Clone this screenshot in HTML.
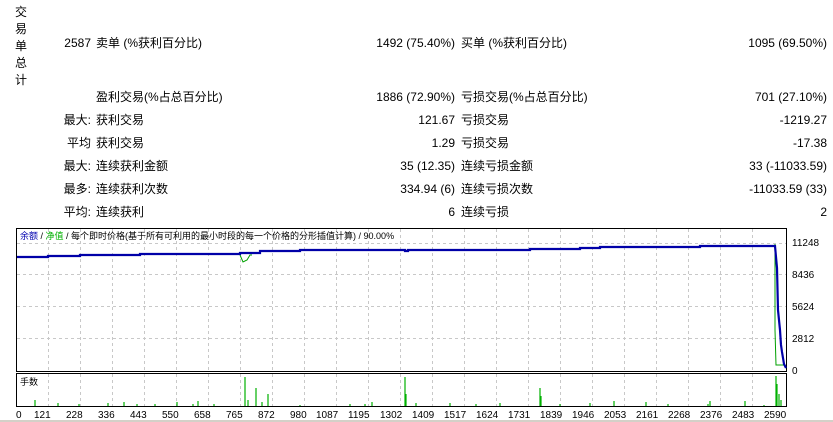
<!DOCTYPE html><html><head><meta charset="utf-8"><style>
body{margin:0;width:833px;height:422px;background:#fff;font-family:"Liberation Sans","Noto Sans CJK SC",sans-serif;font-size:12px;color:#000;position:relative;overflow:hidden}
.t{position:absolute;white-space:nowrap;line-height:14px}
.r{text-align:right}
</style></head><body>
<div class="t" style="left:15px;top:4px;line-height:17px;width:14px">交<br>易<br>单<br>总<br>计</div>
<div class="t r" style="right:742px;top:36px">2587</div>
<div class="t" style="left:96px;top:36px">卖单 (%获利百分比)</div>
<div class="t r" style="right:378px;top:36px">1492 (75.40%)</div>
<div class="t" style="left:461px;top:36px">买单 (%获利百分比)</div>
<div class="t r" style="right:6px;top:36px">1095 (69.50%)</div>

<div class="t" style="left:96px;top:90px">盈利交易(%占总百分比)</div>
<div class="t r" style="right:378px;top:90px">1886 (72.90%)</div>
<div class="t" style="left:461px;top:90px">亏损交易(%占总百分比)</div>
<div class="t r" style="right:6px;top:90px">701 (27.10%)</div>

<div class="t r" style="right:742px;top:113px">最大:</div>
<div class="t" style="left:96px;top:113px">获利交易</div>
<div class="t r" style="right:378px;top:113px">121.67</div>
<div class="t" style="left:461px;top:113px">亏损交易</div>
<div class="t r" style="right:6px;top:113px">-1219.27</div>

<div class="t r" style="right:742px;top:136px">平均</div>
<div class="t" style="left:96px;top:136px">获利交易</div>
<div class="t r" style="right:378px;top:136px">1.29</div>
<div class="t" style="left:461px;top:136px">亏损交易</div>
<div class="t r" style="right:6px;top:136px">-17.38</div>

<div class="t r" style="right:742px;top:159px">最大:</div>
<div class="t" style="left:96px;top:159px">连续获利金额</div>
<div class="t r" style="right:378px;top:159px">35 (12.35)</div>
<div class="t" style="left:461px;top:159px">连续亏损金额</div>
<div class="t r" style="right:6px;top:159px">33 (-11033.59)</div>

<div class="t r" style="right:742px;top:182px">最多:</div>
<div class="t" style="left:96px;top:182px">连续获利次数</div>
<div class="t r" style="right:378px;top:182px">334.94 (6)</div>
<div class="t" style="left:461px;top:182px">连续亏损次数</div>
<div class="t r" style="right:6px;top:182px">-11033.59 (33)</div>

<div class="t r" style="right:742px;top:205px">平均:</div>
<div class="t" style="left:96px;top:205px">连续获利</div>
<div class="t r" style="right:378px;top:205px">6</div>
<div class="t" style="left:461px;top:205px">连续亏损</div>
<div class="t r" style="right:6px;top:205px">2</div>

<svg width="833" height="422" style="position:absolute;left:0;top:0" font-family="Liberation Sans, Noto Sans CJK SC, sans-serif" font-size="9">
<g stroke="#c8c8c8" stroke-dasharray="3,3" stroke-width="1">
<path d="M48.5 229V371M80.5 229V371M112.5 229V371M144.5 229V371M176.5 229V371M208.5 229V371M240.5 229V371M272.5 229V371M304.5 229V371M336.5 229V371M368.5 229V371M400.5 229V371M432.5 229V371M464.5 229V371M496.5 229V371M528.5 229V371M560.5 229V371M592.5 229V371M624.5 229V371M656.5 229V371M688.5 229V371M720.5 229V371M752.5 229V371"/>
<path d="M48.5 374V406M80.5 374V406M112.5 374V406M144.5 374V406M176.5 374V406M208.5 374V406M240.5 374V406M272.5 374V406M304.5 374V406M336.5 374V406M368.5 374V406M400.5 374V406M432.5 374V406M464.5 374V406M496.5 374V406M528.5 374V406M560.5 374V406M592.5 374V406M624.5 374V406M656.5 374V406M688.5 374V406M720.5 374V406M752.5 374V406"/>
<path d="M17 243.5H786M17 274.5H786M17 306.5H786M17 338.5H786"/>
</g>
<rect x="16.5" y="228.5" width="770" height="143" fill="none" stroke="#000"/>
<rect x="16.5" y="373.5" width="770" height="33" fill="none" stroke="#000"/>
<text x="20" y="239" fill="#000"><tspan fill="#0000b0">余额</tspan> / <tspan fill="#00b000">净值</tspan> / 每个即时价格(基于所有可利用的最小时段的每一个价格的分形插值计算) / 90.00%</text>
<text x="20" y="385">手数</text>
<path d="M240 255l3 7 4-2 3-5 2 0" fill="none" stroke="#00a000"/>
<path d="M775 244V330L776 365H785" fill="none" stroke="#00a000"/>
<path d="M17 257H48V256H80V255H140V254H200V254H240V253H260V251H300V250H405V251H408V250H530V249H580V248H600V247H700V246H775L777 268L778 310L780 330L781 345L782 352L783 358L784 364L786 368" fill="none" stroke="#0000a8" stroke-width="2.2"/>
<g stroke="#00b000" stroke-width="1.2">
<path d="M35 406v-6M58 406v-3M79 406v-2M108 406v-3M124 406v-4M137 406v-2M155 406v-2M177 406v-4M193 406v-2M198 406v-5M214 406v-2M245 406v-29M248 406v-6M256 406v-18M262 406v-4M268 406v-12M300 406v-1M350 406v-2M365 406v-2M372 406v-4M405 406v-29M406 406v-12M416 406v-3M450 406v-3M476 406v-2M500 406v-3M540 406v-18M541 406v-10M560 406v-2M590 406v-3M614 406v-5M646 406v-4M668 406v-2M708 406v-2M710 406v-5M745 406v-5M764 406v-1M776 406v-30M777 406v-22M779 406v-12M781 406v-6"/>
</g>
<g fill="#000" font-size="10">
<text x="792" y="246">11248</text><text x="792" y="278">8436</text><text x="792" y="310">5624</text><text x="792" y="342">2812</text><text x="792" y="374">0</text>
<text x="16" y="418">0</text><text x="34" y="418">121</text><text x="66" y="418">228</text><text x="98" y="418">336</text><text x="130" y="418">443</text><text x="162" y="418">550</text><text x="194" y="418">658</text><text x="226" y="418">765</text><text x="258" y="418">872</text><text x="290" y="418">980</text><text x="316" y="418">1087</text><text x="348" y="418">1195</text><text x="380" y="418">1302</text><text x="412" y="418">1409</text><text x="444" y="418">1517</text><text x="476" y="418">1624</text><text x="508" y="418">1731</text><text x="540" y="418">1839</text><text x="572" y="418">1946</text><text x="604" y="418">2053</text><text x="636" y="418">2161</text><text x="668" y="418">2268</text><text x="700" y="418">2376</text><text x="732" y="418">2483</text><text x="764" y="418">2590</text>
</g>
<rect x="0" y="420" width="833" height="2" fill="#d4d0c8"/>
</svg>
</body></html>
